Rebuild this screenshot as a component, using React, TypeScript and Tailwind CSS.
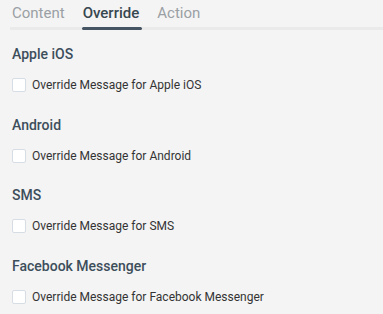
const sections = ['Apple iOS', 'Android', 'SMS', 'Facebook Messenger']

export default function App() {
  return (
    <div className="w-[383px] h-[314px] bg-[#f4f4f4] font-['Roboto',sans-serif] overflow-hidden">
      {/* Tabs */}
      <div className="flex h-[30px] ml-[10px] pl-[2px] gap-[18px] border-b-[3px] border-[#eaeaea]">
        <div className="text-[15px] leading-[27px] text-[#9aa0a4]">Content</div>
        <div className="relative text-[15px] leading-[27px] text-[#37474f] font-medium">
          Override
          <div className="absolute left-[-1px] right-[-3px] bottom-[-3px] h-[3px] rounded-full bg-[#455563]" />
        </div>
        <div className="text-[15px] leading-[27px] text-[#9aa0a4]">Action</div>
      </div>

      <div className="flex flex-col px-3 pt-[17px]">
        {sections.map((name) => (
          <div key={name} className="flex flex-col h-[70.5px]">
            <div className="text-[14px] leading-[14px] font-medium text-[#3d4e5b]">{name}</div>
            <label className="flex items-center gap-[6px] mt-[17px]">
              <span className="w-[14px] h-[14px] rounded-[2px] bg-white border border-[#d6dde5]" />
              <span className="text-[12px] leading-[14px] text-[#333]">Override Message for {name}</span>
            </label>
          </div>
        ))}
      </div>
    </div>
  )
}
